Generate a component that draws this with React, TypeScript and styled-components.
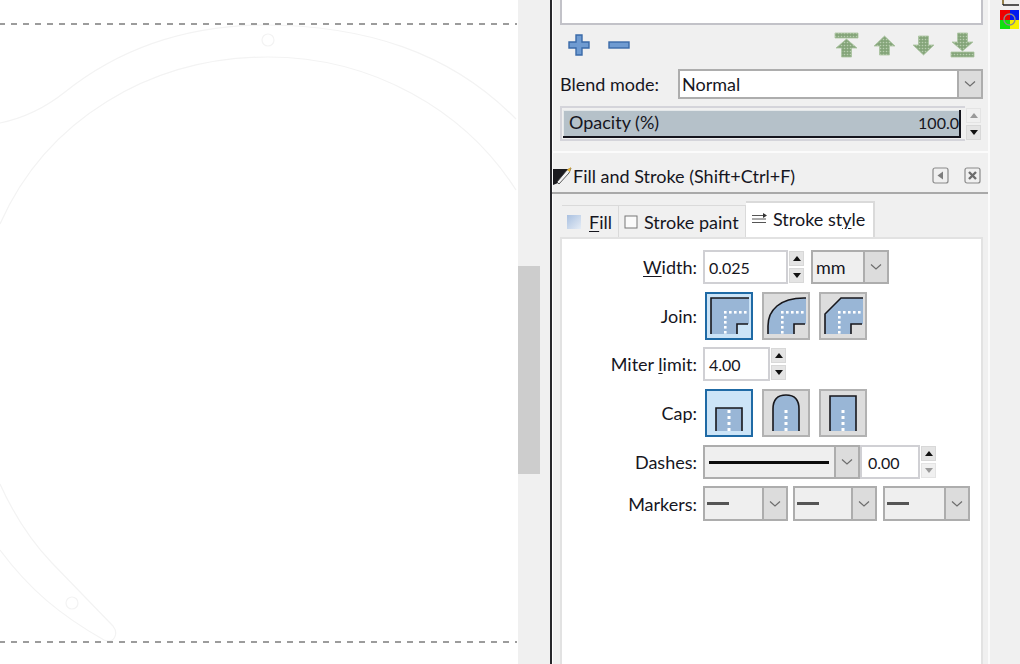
import React from 'react';
import styled, { createGlobalStyle } from 'styled-components';

const GlobalStyle = createGlobalStyle`
  html, body {
    margin: 0;
    padding: 0;
    background: #f0f0f0;
    overflow: hidden;
  }
  body {
    font-family: Lato, "Open Sans", "Liberation Sans", sans-serif;
    font-size: 18px;
    color: #16161e;
  }
`;

const Window = styled.div`
  display: flex;
  width: 1020px;
  height: 664px;
  overflow: hidden;
`;

const CanvasArea = styled.div`
  width: 518px;
  height: 664px;
  background: #fff;
  flex: none;
`;

const CanvasDrawing = styled.svg`
  display: block;
`;

const ScrollTrack = styled.div`
  width: 32px;
  flex: none;
  padding-top: 266px;
  box-sizing: border-box;
`;

const ScrollThumb = styled.div`
  width: 22px;
  height: 208px;
  background: #cdcdcd;
`;

const Dock = styled.div`
  width: 440px;
  flex: none;
  border-left: 2px solid #26262a;
  box-shadow: inset 1px 0 0 #fff;
  box-sizing: border-box;
  display: flex;
  flex-direction: column;
`;

const LayersSection = styled.section`
  height: 151px;
  padding: 0 7px 0 8px;
  display: flex;
  flex-direction: column;
  border-bottom: 2px solid #fbfbfb;
`;

const LayerList = styled.div`
  width: 419px;
  height: 23px;
  background: #fff;
  border: 2px solid #c2c2c8;
  border-top: none;
  flex: none;
`;

const Toolbar = styled.div`
  height: 44px;
  display: flex;
  align-items: center;
  padding: 0 0 4px 8px;
  box-sizing: border-box;
`;

const ToolGap = styled.div<{ $w: number }>`
  width: ${p => p.$w}px;
  flex: none;
`;

const BlendRow = styled.div`
  display: flex;
  align-items: center;
  height: 30px;
`;

const BlendLabel = styled.span`
  width: 118px;
  flex: none;
`;

const OpacityRow = styled.div`
  display: flex;
  margin-top: 7px;
  height: 35px;
  align-items: center;
`;

const OpacityFrame = styled.div`
  width: 405px;
  height: 35px;
  border: 2px solid #d4d4da;
  border-right: none;
  box-sizing: border-box;
  padding: 2px 0 0 1px;
`;

const OpacityBar = styled.div`
  height: 28px;
  width: 398px;
  background: #b5c1c9;
  border-right: 2px solid #14141c;
  border-bottom: 2px solid #14141c;
  box-shadow: inset 1px 1px 0 #e4e8ea;
  box-sizing: border-box;
  display: flex;
  align-items: center;
  justify-content: space-between;
  padding: 0 0 2px 6px;
`;

const OpacityValue = styled.span`
  font-size: 16px;
`;

const Header = styled.header`
  height: 33px;
  padding: 6px 7px 0 0;
  margin-right: 2px;
  border-bottom: 2px solid #a9a9a9;
  display: flex;
  align-items: center;
`;

const HeaderIcon = styled.svg`
  flex: none;
`;

const HeaderTitle = styled.span`
  flex: 1;
  white-space: nowrap;
`;

const HeaderButton = styled.svg`
  flex: none;
  margin-left: 15px;
`;

const TabBar = styled.div`
  display: flex;
  align-items: flex-end;
  margin: 7px 0 0 10px;
  height: 36px;
  flex: none;
`;

const Tab = styled.div<{ $active?: boolean; $w: number }>`
  width: ${p => p.$w}px;
  height: ${p => (p.$active ? 36 : 32)}px;
  box-sizing: border-box;
  display: flex;
  align-items: center;
  gap: 6px;
  white-space: nowrap;
  padding-left: ${p => (p.$active ? 6 : 5)}px;
  background: ${p => (p.$active ? '#fff' : '#f0f0f0')};
  border: 1px solid #dadada;
  border-width: ${p => (p.$active ? '2px 2px 0 0' : '1px 1px 0 0')};
  padding-bottom: ${p => (p.$active ? 2 : 0)}px;
`;

const FillTabText = styled.span`
  margin-left: 2px;
`;

const Page = styled.div`
  flex: 1;
  margin: 0 7px 0 8px;
  background: #fff;
  border: 2px solid #e2e2e2;
  border-bottom: none;
  box-sizing: border-box;
  padding: 11px 0 0 0;
`;

const Form = styled.div`
  display: grid;
  grid-template-columns: 135px 1fr;
  column-gap: 6px;
  row-gap: 7px;
  align-items: center;
`;

const FieldLabel = styled.label`
  text-align: right;
  white-space: nowrap;
`;

const Key = styled.span`
  text-decoration: underline;
  text-underline-offset: 2px;
`;

const Controls = styled.div`
  display: flex;
  align-items: center;
`;

const ButtonRow = styled.div<{ $after?: number }>`
  display: flex;
  gap: 9px;
  padding-left: 2px;
  margin-top: 1px;
  margin-bottom: ${p => p.$after ?? 0}px;
`;

const NumberBox = styled.div<{ $w: number; $pl?: number }>`
  width: ${p => p.$w}px;
  height: 34px;
  box-sizing: border-box;
  border: 2px solid #d0d0d4;
  background: #fff;
  padding-left: ${p => p.$pl ?? 4}px;
  display: flex;
  align-items: center;
  font-size: 16px;
`;

const Spin = styled.div`
  width: 15px;
  flex: none;
  margin-left: 1px;
  display: flex;
  flex-direction: column;
  gap: 2px;
`;

const SpinButton = styled.div<{ $down?: boolean; $off?: boolean }>`
  height: 15px;
  background: ${p => (p.$off ? '#f0f0f0' : '#e4e4e4')};
  border: 1px solid ${p => (p.$off ? '#e4e4e4' : '#d8d8d8')};
  box-sizing: border-box;
  display: flex;
  align-items: center;
  justify-content: center;

  &::after {
    content: '';
    border-left: 4.5px solid transparent;
    border-right: 4.5px solid transparent;
    ${p => (p.$down ? 'border-top' : 'border-bottom')}: 5px solid ${p => (p.$off ? '#9a9a9a' : '#111')};
  }
`;

const Combo = styled.div<{ $w: number; $h?: number; $light?: boolean; $ml?: number }>`
  width: ${p => p.$w}px;
  height: ${p => p.$h ?? 34}px;
  margin-left: ${p => p.$ml ?? 0}px;
  flex: none;
  box-sizing: border-box;
  border: 2px solid #adadad;
  background: ${p => (p.$light ? '#fff' : '#efefef')};
  display: flex;
  align-items: center;
`;

const ComboValue = styled.div<{ $pl?: number }>`
  flex: 1;
  min-width: 0;
  padding-left: ${p => p.$pl ?? 2}px;
  display: flex;
  align-items: center;
`;

const ComboArrow = styled.div`
  width: 24px;
  align-self: stretch;
  flex: none;
  background: #dcdcdc;
  border-left: 2px solid #adadad;
  box-sizing: border-box;
  display: flex;
  align-items: center;
  justify-content: center;
`;

const LineSample = styled.div<{ $w: number; $h: number; $c: string }>`
  width: ${p => p.$w}px;
  height: ${p => p.$h}px;
  background: ${p => p.$c};
`;

const ToggleBtn = styled.div<{ $active?: boolean }>`
  width: 48px;
  height: 48px;
  box-sizing: border-box;
  border: 2px solid ${p => (p.$active ? '#1f6aa5' : '#b2b2b2')};
  background: ${p => (p.$active ? '#cce4f7' : '#dddddd')};
`;

const ToggleArt = styled.svg`
  display: block;
  margin: -2px;
`;

const RightStrip = styled.aside`
  flex: 1;
  padding: 0 0 0 9px;
  position: relative;
`;

const StripLine = styled.div`
  position: absolute;
  left: -2px;
  top: 0;
  bottom: 0;
  width: 2px;
  background: #fbfbfb;
`;

const Chevron = () => (
  <svg width="12" height="8" viewBox="0 0 12 8">
    <path d="M1 1.5 L6 6 L11 1.5" fill="none" stroke="#6d6d6d" strokeWidth="1.2" />
  </svg>
);

const dotPattern = (id: string) => (
  <defs>
    <pattern id={id} width="3" height="3" patternUnits="userSpaceOnUse">
      <rect width="3" height="3" fill="#85a57a" />
      <circle cx="1.5" cy="1.5" r="0.8" fill="#b9ceb0" />
    </pattern>
  </defs>
);

const PlusIcon = () => (
  <svg width="22" height="22" viewBox="0 0 22 22">
    <path d="M8 1 H14 V8 H21 V14 H14 V21 H8 V14 H1 V8 H8 Z" fill="#6f9bd1" stroke="#3a6aa8" strokeWidth="1.4" />
  </svg>
);

const MinusIcon = () => (
  <svg width="22" height="8" viewBox="0 0 22 8">
    <rect x="1" y="1" width="20" height="6" fill="#6f9bd1" stroke="#3a6aa8" strokeWidth="1.4" />
  </svg>
);

type ArrowKind = 'top' | 'up' | 'down' | 'bottom';

const arrowPaths: Record<ArrowKind, string> = {
  top: 'M1 1 H24 V6 H1 Z M12.5 7 L23 16 H17.5 V25 H7.5 V16 H2 Z',
  up: 'M11.5 1 L22 11 H16.5 V20 H6.5 V11 H1 Z',
  down: 'M6.5 1 H16.5 V10 H22 L11.5 20 L1 10 H6.5 Z',
  bottom: 'M7.5 1 H17.5 V10 H23 L12.5 19 L2 10 H7.5 Z M1 20 H24 V25 H1 Z',
};

const ArrowIcon = ({ kind }: { kind: ArrowKind }) => {
  const small = kind === 'up' || kind === 'down';
  const w = small ? 23 : 25;
  const h = small ? 21 : 26;
  return (
    <svg width={w} height={h} viewBox={`0 0 ${w} ${h}`}>
      {dotPattern(`dots-${kind}`)}
      <path d={arrowPaths[kind]} fill={`url(#dots-${kind})`} stroke="#a9c3a0" strokeWidth="0.8" />
    </svg>
  );
};

const JOIN_FILL: Record<string, string> = {
  miter: 'M6 6 H44 V32 H32 V42 H6 Z',
  round: 'M6 42 V34 C6 18 18 6 42 6 H44 V32 H32 V42 Z',
  bevel: 'M6 42 V22 L22 6 H44 V32 H32 V42 Z',
};

const JOIN_LINE: Record<string, string> = {
  miter: 'M6 42 V6 H44',
  round: 'M6 42 V34 C6 18 18 6 42 6 H44',
  bevel: 'M6 42 V22 L22 6 H44',
};

const JoinArt = ({ kind }: { kind: string }) => (
  <ToggleArt width="48" height="48" viewBox="0 0 48 48">
    <path d={JOIN_FILL[kind]} fill="#99b6d6" />
    <path d={JOIN_LINE[kind]} fill="none" stroke="#17171c" strokeWidth="1.6" />
    <path d="M43 32 H32 V42" fill="none" stroke="#17171c" strokeWidth="1.6" />
    {[19, 24, 29, 34, 39].map(x => (
      <rect key={x} x={x} y="19" width="2.6" height="2.6" fill="#fff" />
    ))}
    {[24, 29, 34, 39].map(y => (
      <rect key={y} x="19" y={y} width="2.6" height="2.6" fill="#fff" />
    ))}
  </ToggleArt>
);

const CAP_FILL: Record<string, string> = {
  butt: 'M11 19 H37 V42 H11 Z',
  round: 'M11 42 V20 Q11 6 24 6 Q37 6 37 20 V42 Z',
  square: 'M11 7 H37 V42 H11 Z',
};

const CAP_LINE: Record<string, string> = {
  butt: 'M11 42 V19 H37 V42',
  round: 'M11 42 V20 Q11 6 24 6 Q37 6 37 20 V42',
  square: 'M11 42 V7 H37 V42',
};

const CapArt = ({ kind }: { kind: string }) => (
  <ToggleArt width="48" height="48" viewBox="0 0 48 48">
    <path d={CAP_FILL[kind]} fill="#99b6d6" />
    <path d={CAP_LINE[kind]} fill="none" stroke="#17171c" strokeWidth="1.6" />
    {[21, 27, 33, 39].map(y => (
      <rect key={y} x="22.5" y={y} width="3" height="3" fill="#fff" />
    ))}
  </ToggleArt>
);

const App: React.FC = () => {
  return (
    <Window>
      <GlobalStyle />
      <CanvasArea>
        <CanvasDrawing width="518" height="664" viewBox="0 0 518 664">
          <g fill="none" stroke="#f3f3f3" strokeWidth="1.2">
            <path d="M0 123 C24 118 45 108 65 92 C115 52 180 26 262 25 C365 25 450 52 516 119" />
            <path d="M0 224 C46 120 150 57 268 57 C372 57 465 110 516 190" />
            <circle cx="268" cy="40" r="6" />
            <path d="M0 484 C14 515 30 540 52 563 L113 626 C119 634 114 644 104 640 C60 615 30 590 0 550" />
            <circle cx="72" cy="603" r="6" />
          </g>
          <g stroke="#7c7c7c" strokeWidth="1.5" strokeDasharray="6 6">
            <line x1="-1" y1="24" x2="517" y2="24" />
            <line x1="-1" y1="642" x2="517" y2="642" />
          </g>
        </CanvasDrawing>
      </CanvasArea>
      <ScrollTrack>
        <ScrollThumb />
      </ScrollTrack>

      <Dock>
        <LayersSection>
          <LayerList />
          <Toolbar>
            <PlusIcon />
            <ToolGap $w={18} />
            <MinusIcon />
            <ToolGap $w={204} />
            <ArrowIcon kind="top" />
            <ToolGap $w={14} />
            <ArrowIcon kind="up" />
            <ToolGap $w={16} />
            <ArrowIcon kind="down" />
            <ToolGap $w={15} />
            <ArrowIcon kind="bottom" />
          </Toolbar>
          <BlendRow>
            <BlendLabel>Blend mode:</BlendLabel>
            <Combo $w={305} $h={30} $light>
              <ComboValue>Normal</ComboValue>
              <ComboArrow>
                <Chevron />
              </ComboArrow>
            </Combo>
          </BlendRow>
          <OpacityRow>
            <OpacityFrame>
              <OpacityBar>
                <span>Opacity (%)</span>
                <OpacityValue>100.0</OpacityValue>
              </OpacityBar>
            </OpacityFrame>
            <Spin>
              <SpinButton $off />
              <SpinButton $down />
            </Spin>
          </OpacityRow>
        </LayersSection>

        <Header>
          <HeaderIcon width="21" height="22" viewBox="0 0 21 22">
            <path d="M1 4 H17 L6 18 L1 20 Z" fill="#1b1b1f" />
            <path d="M5 17 L15 5 L19 3 L17 8 L7 19 Z" fill="#f4f4f4" stroke="#333" strokeWidth="0.8" />
            <path d="M15 5 L19 2 L18 7 Z" fill="#e8b53a" />
          </HeaderIcon>
          <HeaderTitle>Fill and Stroke (Shift+Ctrl+F)</HeaderTitle>
          <HeaderButton width="17" height="17" viewBox="0 0 17 17">
            <rect x="1" y="1" width="15" height="15" rx="2" fill="#f0f0f0" stroke="#8a8a8a" strokeWidth="1.2" />
            <path d="M11 4.5 V12.5 L5.5 8.5 Z" fill="#7d7d7d" />
          </HeaderButton>
          <HeaderButton width="17" height="17" viewBox="0 0 17 17">
            <rect x="1" y="1" width="15" height="15" rx="2" fill="#f0f0f0" stroke="#8a8a8a" strokeWidth="1.2" />
            <path d="M5 5 L12 12 M12 5 L5 12" stroke="#6d6d6d" strokeWidth="2.4" />
          </HeaderButton>
        </Header>

        <TabBar>
          <Tab $w={57}>
            <svg width="14" height="14" viewBox="0 0 14 14">
              <defs>
                <linearGradient id="fillSwatch" x1="0" y1="0" x2="1" y2="1">
                  <stop offset="0" stopColor="#a9c0e0" />
                  <stop offset="1" stopColor="#e6edf6" />
                </linearGradient>
              </defs>
              <rect width="14" height="14" fill="url(#fillSwatch)" />
            </svg>
            <FillTabText><Key>F</Key>ill</FillTabText>
          </Tab>
          <Tab $w={127}>
            <svg width="14" height="14" viewBox="0 0 14 14">
              <rect x="1" y="1" width="12" height="12" fill="#fafafa" stroke="#777" strokeWidth="1" />
            </svg>
            <span>Stroke paint</span>
          </Tab>
          <Tab $w={129} $active>
            <svg width="15" height="12" viewBox="0 0 15 12">
              <path d="M0 2.5 H11 M0 6 H14 M0 9.5 H14" stroke="#555" strokeWidth="1" />
              <path d="M11 0 L15 2.5 L11 5 Z" fill="#333" />
            </svg>
            <span>Stroke st<Key>y</Key>le</span>
          </Tab>
        </TabBar>

        <Page>
          <Form>
            <FieldLabel><Key>W</Key>idth:</FieldLabel>
            <Controls>
              <NumberBox $w={85}>0.025</NumberBox>
              <Spin>
                <SpinButton />
                <SpinButton $down />
              </Spin>
              <Combo $w={78} $ml={7}>
                <ComboValue $pl={3}>mm</ComboValue>
                <ComboArrow>
                  <Chevron />
                </ComboArrow>
              </Combo>
            </Controls>

            <FieldLabel>Join:</FieldLabel>
            <ButtonRow>
              <ToggleBtn $active><JoinArt kind="miter" /></ToggleBtn>
              <ToggleBtn><JoinArt kind="round" /></ToggleBtn>
              <ToggleBtn><JoinArt kind="bevel" /></ToggleBtn>
            </ButtonRow>

            <FieldLabel>Miter <Key>l</Key>imit:</FieldLabel>
            <Controls>
              <NumberBox $w={67}>4.00</NumberBox>
              <Spin>
                <SpinButton />
                <SpinButton $down />
              </Spin>
            </Controls>

            <FieldLabel>Cap:</FieldLabel>
            <ButtonRow $after={1}>
              <ToggleBtn $active><CapArt kind="butt" /></ToggleBtn>
              <ToggleBtn><CapArt kind="round" /></ToggleBtn>
              <ToggleBtn><CapArt kind="square" /></ToggleBtn>
            </ButtonRow>

            <FieldLabel>Dashes:</FieldLabel>
            <Controls>
              <Combo $w={157}>
                <ComboValue $pl={4}>
                  <LineSample $w={120} $h={3} $c="#0c0c0c" />
                </ComboValue>
                <ComboArrow>
                  <Chevron />
                </ComboArrow>
              </Combo>
              <NumberBox $w={60} $pl={6}>0.00</NumberBox>
              <Spin>
                <SpinButton />
                <SpinButton $down $off />
              </Spin>
            </Controls>

            <FieldLabel>Markers:</FieldLabel>
            <Controls>
              <Combo $w={85} $h={35}>
                <ComboValue>
                  <LineSample $w={22} $h={3} $c="#555" />
                </ComboValue>
                <ComboArrow>
                  <Chevron />
                </ComboArrow>
              </Combo>
              <Combo $w={84} $h={35} $ml={5}>
                <ComboValue>
                  <LineSample $w={22} $h={3} $c="#555" />
                </ComboValue>
                <ComboArrow>
                  <Chevron />
                </ComboArrow>
              </Combo>
              <Combo $w={87} $h={35} $ml={6}>
                <ComboValue>
                  <LineSample $w={22} $h={3} $c="#555" />
                </ComboValue>
                <ComboArrow>
                  <Chevron />
                </ComboArrow>
              </Combo>
            </Controls>
          </Form>
        </Page>
      </Dock>

      <RightStrip>
        <StripLine />
        <svg width="21" height="30" viewBox="0 0 21 30">
          <path d="M4 0 V5 M4 5 H20" stroke="#222" strokeWidth="1.4" fill="none" />
          <path d="M4 0 V4" stroke="#c9a23a" strokeWidth="1" />
          <rect x="1" y="10" width="10" height="10" fill="#f00000" />
          <rect x="11" y="10" width="9" height="10" fill="#0018f0" />
          <rect x="1" y="20" width="10" height="9" fill="#10e010" />
          <rect x="11" y="20" width="9" height="9" fill="#f6f000" />
          <circle cx="10.5" cy="19.5" r="5.5" fill="none" stroke="#8a8a8a" strokeWidth="1.4" />
        </svg>
      </RightStrip>
    </Window>
  );
};

export default App;
